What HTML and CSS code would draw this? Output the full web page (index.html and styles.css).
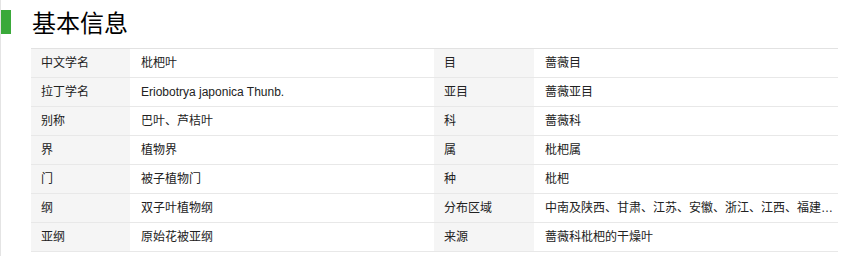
FILE: index.html
```html
<!DOCTYPE html>
<html lang="zh-CN">
<head>
<meta charset="utf-8">
<title>基本信息</title>
<link rel="stylesheet" href="styles.css">
</head>
<body>
<div class="page">
  <div class="heading">
    <span class="bar"></span>
    <h2 class="title">基本信息</h2>
  </div>
  <div class="info">
    <div class="cell label">中文学名</div><div class="cell value">枇杷叶</div>
    <div class="cell label">目</div><div class="cell value">蔷薇目</div>
    <div class="cell label">拉丁学名</div><div class="cell value">Eriobotrya japonica Thunb.</div>
    <div class="cell label">亚目</div><div class="cell value">蔷薇亚目</div>
    <div class="cell label">别称</div><div class="cell value">巴叶、芦桔叶</div>
    <div class="cell label">科</div><div class="cell value">蔷薇科</div>
    <div class="cell label">界</div><div class="cell value">植物界</div>
    <div class="cell label">属</div><div class="cell value">枇杷属</div>
    <div class="cell label">门</div><div class="cell value">被子植物门</div>
    <div class="cell label">种</div><div class="cell value">枇杷</div>
    <div class="cell label">纲</div><div class="cell value">双子叶植物纲</div>
    <div class="cell label">分布区域</div><div class="cell value">中南及陕西、甘肃、江苏、安徽、浙江、江西、福建…</div>
    <div class="cell label">亚纲</div><div class="cell value">原始花被亚纲</div>
    <div class="cell label">来源</div><div class="cell value">蔷薇科枇杷的干燥叶</div>
  </div>
</div>
</body>
</html>
```

FILE: styles.css
```css
html, body {
  margin: 0;
  padding: 0;
  background: #fff;
}
body {
  font-family: "Liberation Sans", Arial, "Noto Sans CJK SC", sans-serif;
  color: #333;
}
.page {
  border-left: 1px solid #e4e4e4;
  min-height: 256px;
  box-sizing: border-box;
  padding-top: 10px;
}
.heading {
  display: flex;
  align-items: center;
  height: 24px;
}
.bar {
  width: 10px;
  height: 24px;
  background: #3aa93a;
}
.title {
  margin: 0 0 0 21px;
  font-family: "Noto Sans CJK SC", sans-serif;
  font-size: 24px;
  font-weight: 400;
  line-height: 24px;
  color: #000;
}
.info {
  margin: 14px 0 0 30px;
  width: 807px;
  display: grid;
  grid-template-columns: 99px 304px 100px 304px;
  border-top: 1px solid #e2e2e2;
}
.cell {
  height: 28px;
  line-height: 28px;
  font-size: 12px;
  border-bottom: 1px solid #e8e8e8;
  padding: 0 0 0 10px;
  white-space: nowrap;
  color: #222;
}
.label {
  background: #f5f5f5;
}
.value {
  background: #fff;
  padding-left: 11px;
}
```
